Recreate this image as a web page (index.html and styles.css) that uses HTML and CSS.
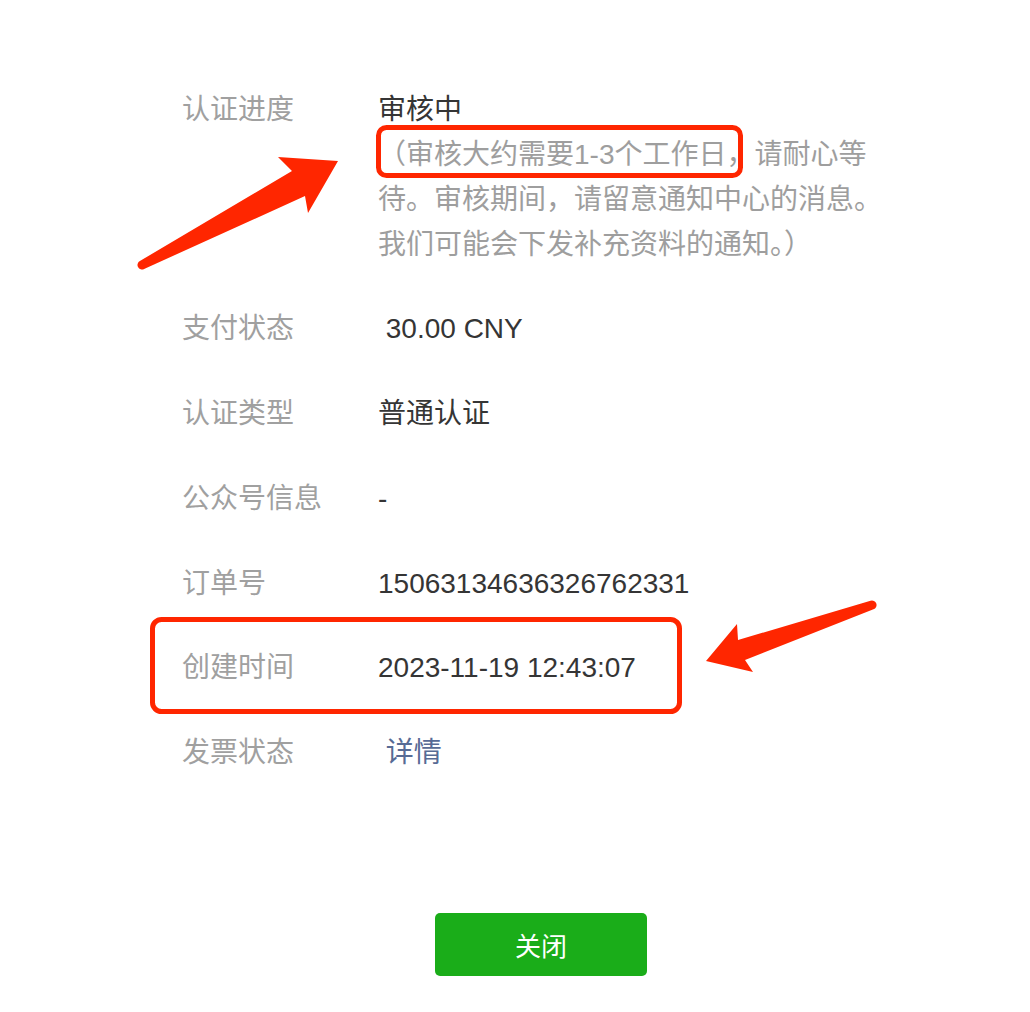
FILE: index.html
```html
<!DOCTYPE html>
<html lang="zh-CN">
<head>
<meta charset="utf-8">
<title>认证详情</title>
<link rel="stylesheet" href="styles.css">
</head>
<body>
<div class="page">
  <div class="info">
    <div class="row">
      <div class="label">认证进度</div>
      <div class="value">
        <div>审核中</div>
        <div class="desc">（审核大约需要1-3个工作日，请耐心等待。审核期间，请留意通知中心的消息。我们可能会下发补充资料的通知。）</div>
      </div>
    </div>
    <div class="row">
      <div class="label">支付状态</div>
      <div class="value">&nbsp;30.00 CNY</div>
    </div>
    <div class="row">
      <div class="label">认证类型</div>
      <div class="value">普通认证</div>
    </div>
    <div class="row">
      <div class="label">公众号信息</div>
      <div class="value">-</div>
    </div>
    <div class="row">
      <div class="label">订单号</div>
      <div class="value">15063134636326762331</div>
    </div>
    <div class="row">
      <div class="label">创建时间</div>
      <div class="value">2023-11-19 12:43:07</div>
    </div>
    <div class="row">
      <div class="label">发票状态</div>
      <div class="value"><a class="link" href="#">&nbsp;详情</a></div>
    </div>
  </div>
  <div class="actions">
    <button class="btn" type="button">关闭</button>
  </div>

  <svg class="annot" width="1030" height="1012" viewBox="0 0 1030 1012" aria-hidden="true">
    <rect x="378.5" y="127.5" width="362" height="48" rx="8" fill="none" stroke="#ff2600" stroke-width="5"/>
    <rect x="152.5" y="619.5" width="527" height="92" rx="9" fill="none" stroke="#ff2600" stroke-width="5"/>
    <path d="M292 171 L278 157 L338 161 L308 213 L305 196 L144.1 269 A4.5 4.5 0 0 1 139.9 261 Z" fill="#ff2600"/>
    <path d="M738 640 L737 624 L706 661 L753 672 L745 660 L873.5 609.3 A4.5 4.5 0 0 0 870.5 600.7 Z" fill="#ff2600"/>
  </svg>
</div>
</body>
</html>
```
FILE: styles.css
```css
html, body {
  margin: 0;
  padding: 0;
  background: #ffffff;
}

body {
  font-family: "Liberation Sans", "Noto Sans CJK SC", sans-serif;
  font-size: 28px;
  line-height: 45px;
  color: #353535;
}

.page {
  position: relative;
  width: 1030px;
  height: 1012px;
  box-sizing: border-box;
  padding: 86.5px 0 0 182px;
  display: flex;
  flex-direction: column;
}

.info {
  display: flex;
  flex-direction: column;
  gap: 39.8px;
}

.row {
  display: flex;
  align-items: flex-start;
}

.label {
  width: 196px;
  flex: none;
  color: #a0a0a0;
}

.value {
  width: 510px;
  color: #353535;
}

.desc {
  color: #9e9e9e;
}

.link {
  color: #576b95;
  text-decoration: none;
}

.actions {
  margin-top: 138px;
  padding-left: 253px;
}

.btn {
  width: 212px;
  height: 63px;
  border: none;
  border-radius: 5px;
  background: #1aad19;
  color: #ffffff;
  font-family: "Noto Sans CJK SC", sans-serif;
  font-size: 26px;
  padding: 0;
  cursor: pointer;
}

.annot {
  position: absolute;
  left: 0;
  top: 0;
  pointer-events: none;
}
```
